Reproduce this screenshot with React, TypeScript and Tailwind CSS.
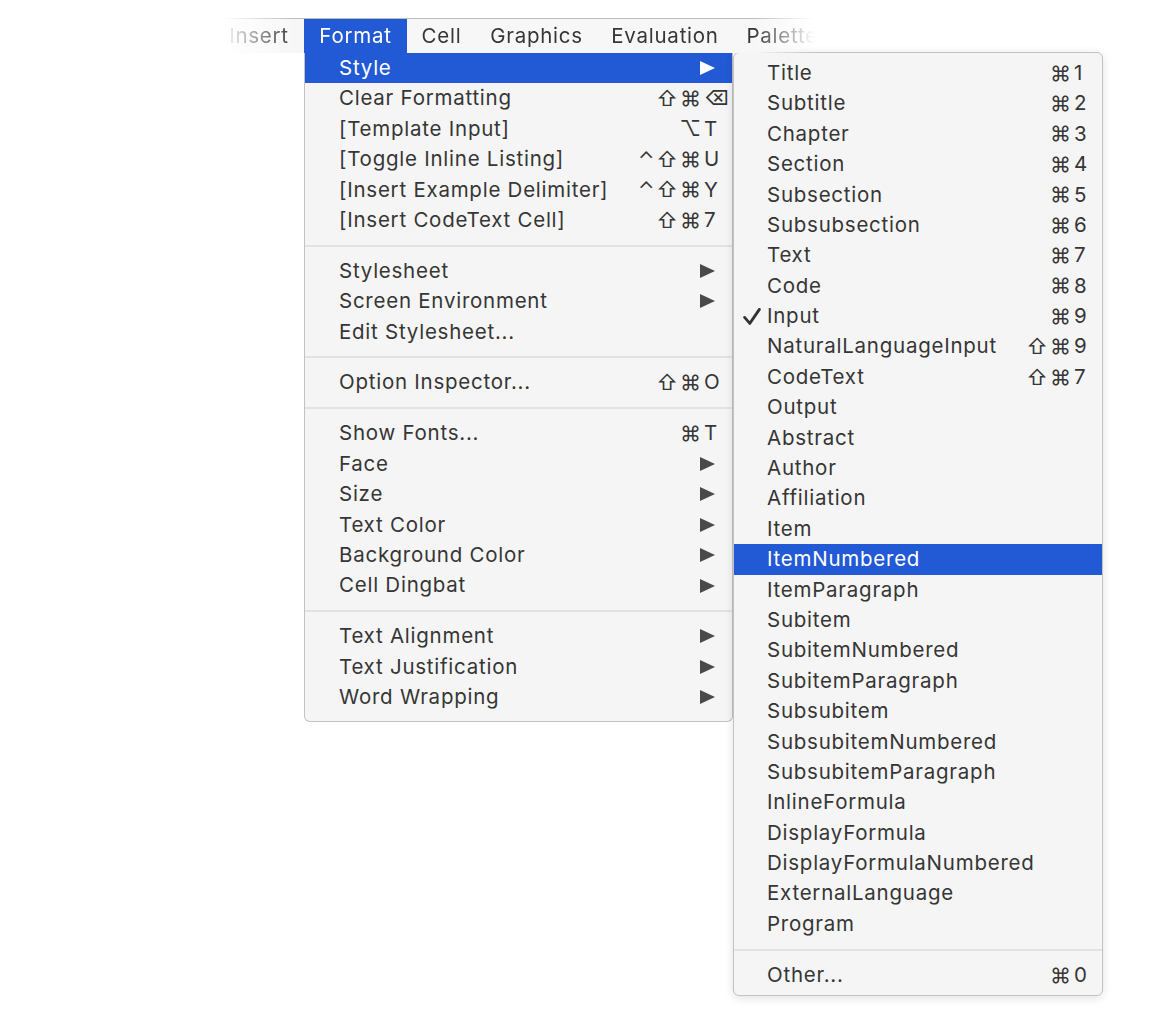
import React from "react";

type Row = {
  label: string;
  mods?: string;
  k?: string;
  arrow?: boolean;
  active?: boolean;
  checked?: boolean;
};
type Entry = Row | "sep";

const FONT = "font-['Inter','DejaVu_Sans',sans-serif]";

const formatMenu: Entry[] = [
  { label: "Style", arrow: true, active: true },
  { label: "Clear Formatting", mods: "⇧⌘", k: "⌫" },
  { label: "[Template Input]", mods: "⌥", k: "T" },
  { label: "[Toggle Inline Listing]", mods: "⌃⇧⌘", k: "U" },
  { label: "[Insert Example Delimiter]", mods: "⌃⇧⌘", k: "Y" },
  { label: "[Insert CodeText Cell]", mods: "⇧⌘", k: "7" },
  "sep",
  { label: "Stylesheet", arrow: true },
  { label: "Screen Environment", arrow: true },
  { label: "Edit Stylesheet..." },
  "sep",
  { label: "Option Inspector...", mods: "⇧⌘", k: "O" },
  "sep",
  { label: "Show Fonts...", mods: "⌘", k: "T" },
  { label: "Face", arrow: true },
  { label: "Size", arrow: true },
  { label: "Text Color", arrow: true },
  { label: "Background Color", arrow: true },
  { label: "Cell Dingbat", arrow: true },
  "sep",
  { label: "Text Alignment", arrow: true },
  { label: "Text Justification", arrow: true },
  { label: "Word Wrapping", arrow: true },
];

const styleMenu: Entry[] = [
  { label: "Title", mods: "⌘", k: "1" },
  { label: "Subtitle", mods: "⌘", k: "2" },
  { label: "Chapter", mods: "⌘", k: "3" },
  { label: "Section", mods: "⌘", k: "4" },
  { label: "Subsection", mods: "⌘", k: "5" },
  { label: "Subsubsection", mods: "⌘", k: "6" },
  { label: "Text", mods: "⌘", k: "7" },
  { label: "Code", mods: "⌘", k: "8" },
  { label: "Input", mods: "⌘", k: "9", checked: true },
  { label: "NaturalLanguageInput", mods: "⇧⌘", k: "9" },
  { label: "CodeText", mods: "⇧⌘", k: "7" },
  { label: "Output" },
  { label: "Abstract" },
  { label: "Author" },
  { label: "Affiliation" },
  { label: "Item" },
  { label: "ItemNumbered", active: true },
  { label: "ItemParagraph" },
  { label: "Subitem" },
  { label: "SubitemNumbered" },
  { label: "SubitemParagraph" },
  { label: "Subsubitem" },
  { label: "SubsubitemNumbered" },
  { label: "SubsubitemParagraph" },
  { label: "InlineFormula" },
  { label: "DisplayFormula" },
  { label: "DisplayFormulaNumbered" },
  { label: "ExternalLanguage" },
  { label: "Program" },
  "sep",
  { label: "Other...", mods: "⌘", k: "0" },
];

const menubar = [
  { label: "Insert", w: "w-[90px]" },
  { label: "Format", w: "w-[103px]", active: true },
  { label: "Cell", w: "w-[69px]" },
  { label: "Graphics", w: "w-[121px]" },
  { label: "Evaluation", w: "w-[136px]" },
  { label: "Palettes", w: "w-[110px]" },
];

function Arrow({ white }: { white?: boolean }) {
  return (
    <svg width="15" height="14" viewBox="0 0 15 14" className="shrink-0">
      <polygon points="0,0 15,7 0,14" fill={white ? "#ffffff" : "#4a4a4a"} />
    </svg>
  );
}

function Check() {
  return (
    <svg width="18" height="17" viewBox="0 0 18 17" className="shrink-0">
      <path d="M1.6 9.4 L6.8 15.4 L16.4 1.4" fill="none" stroke="#333333" strokeWidth="2.8" strokeLinecap="round" strokeLinejoin="round" />
    </svg>
  );
}

function Separator() {
  return (
    <div className="h-[20.5px] flex items-center">
      <div className="h-[2px] w-full bg-[#e2e2e2]" />
    </div>
  );
}

function MenuRow({ row, sub }: { row: Row; sub?: boolean }) {
  const color = row.active ? "bg-[#2259d4] text-white" : "text-[#363636]";
  return (
    <div className={`h-[30.4px] flex items-center ${color}`}>
      <div className={`${sub ? "w-[33px]" : "w-[34px]"} h-full flex items-center shrink-0`}>
        {row.checked && (
          <span className="ml-[9px] flex">
            <Check />
          </span>
        )}
      </div>
      <span className="flex-1 whitespace-nowrap">{row.label}</span>
      {row.arrow && (
        <span className="mr-[17px] flex">
          <Arrow white={row.active} />
        </span>
      )}
      {row.k && (
        <span className="flex items-center tracking-normal">
          <span className="tracking-[2px] text-[21px] whitespace-nowrap">{row.mods}</span>
          <span className={`${sub ? "w-[20px] mr-[9px]" : "w-[24px] mr-[5px]"} pl-[1px] whitespace-nowrap`}>
            {row.k}
          </span>
        </span>
      )}
    </div>
  );
}

export default function App() {
  return (
    <div className={`w-[1158px] h-[1032px] bg-white overflow-hidden ${FONT} text-[20.5px] tracking-[0.75px] leading-none`}>
      {/* menu bar strip, fading out on both ends */}
      <div className="ml-[214px] mt-[18px] w-[629px] h-[35px] flex border-t border-[#bcbcbc] bg-[#f7f7f7] shadow-[0_1px_0_rgba(0,0,0,0.45)] [mask-image:linear-gradient(to_right,transparent_8px,black_80px,black_540px,transparent_600px)] [-webkit-mask-image:linear-gradient(to_right,transparent_8px,black_80px,black_540px,transparent_600px)]">
        {menubar.map((m) => (
          <div
            key={m.label}
            className={`${m.w} h-full flex items-center justify-center ${
              m.active ? "bg-[#2259d4] text-white" : "text-[#363636]"
            }`}
          >
            {m.label}
          </div>
        ))}
      </div>

      <div className="flex items-start ml-[304px]">
        {/* Format menu */}
        <div className="w-[429px] bg-[#f5f5f5] border-x border-b border-[#c2c2c2] rounded-b-[6px] pb-[9px]">
          {formatMenu.map((e, i) =>
            e === "sep" ? <Separator key={i} /> : <MenuRow key={i} row={e} />
          )}
        </div>

        {/* Style submenu */}
        <div className="-mt-[1px] w-[370px] bg-[#f5f5f5] border border-[#c2c2c2] rounded-[6px] pt-[5px] pb-[5px] shadow-[0_2px_10px_rgba(0,0,0,0.12)]">
          {styleMenu.map((e, i) =>
            e === "sep" ? <Separator key={i} /> : <MenuRow key={i} row={e} sub />
          )}
        </div>
      </div>
    </div>
  );
}
